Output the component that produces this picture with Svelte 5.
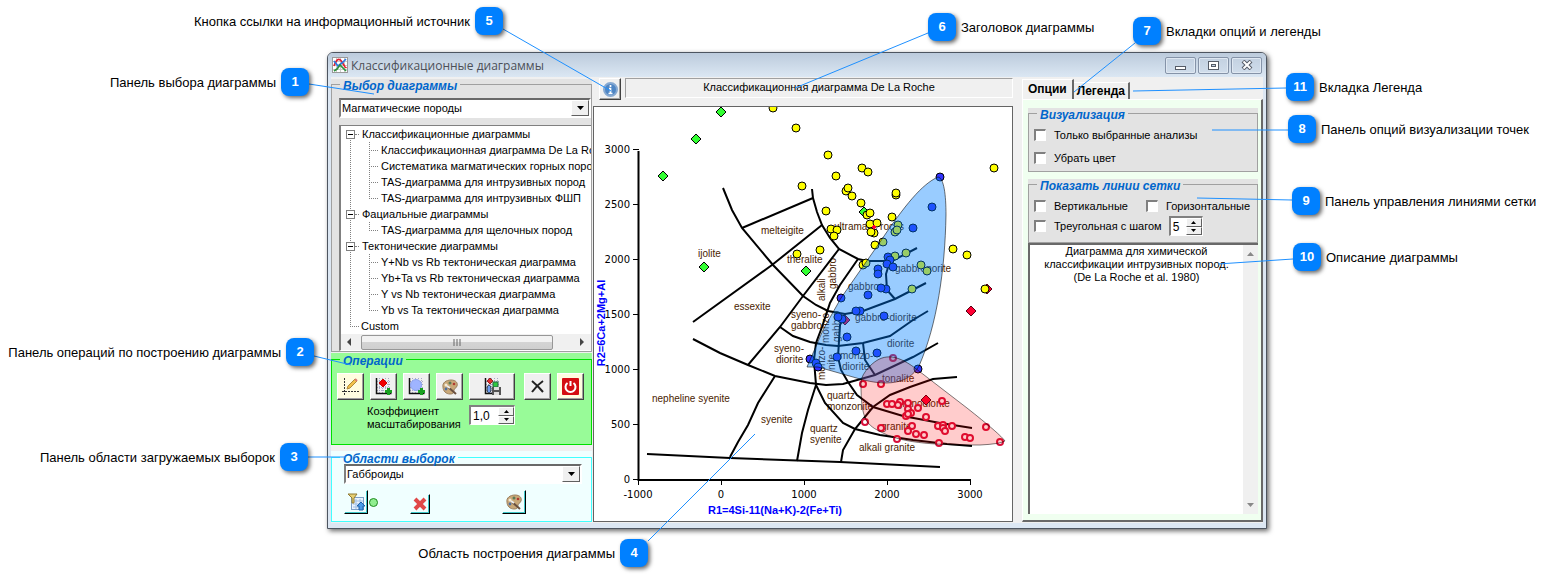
<script>
    const callouts = [
        { n: 1, x: 281, y: 68, side: "left", label: "Панель выбора диаграммы", line: [309, 84, 374, 94] },
        { n: 2, x: 286, y: 338, side: "left", label: "Панель операций по построению диаграммы", line: [314, 356, 351, 365] },
        { n: 3, x: 280, y: 443, side: "left", label: "Панель области загружаемых выборок", line: [308, 457, 346, 457] },
        { n: 4, x: 620, y: 539, side: "left", label: "Область построения диаграммы", line: [648, 541, 755, 434] },
        { n: 5, x: 475, y: 7, side: "left", label: "Кнопка ссылки на информационный источник", line: [503, 29, 611, 91] },
        { n: 6, x: 928, y: 13, side: "right", label: "Заголовок диаграммы", line: [928, 33, 795, 88] },
        { n: 7, x: 1133, y: 17, side: "right", label: "Вкладки опций и легенды", line: [1135, 43, 1074, 92] },
        { n: 8, x: 1288, y: 115, side: "right", label: "Панель опций визуализации точек", line: [1288, 130, 1212, 130] },
        { n: 9, x: 1292, y: 187, side: "right", label: "Панель управления линиями сетки", line: [1292, 200, 1197, 198] },
        { n: 10, x: 1293, y: 243, side: "right", label: "Описание диаграммы", line: [1293, 259, 1218, 264] },
        { n: 11, x: 1286, y: 73, side: "right", label: "Вкладка Легенда", line: [1286, 88, 1133, 91] },
    ];

    const tree = [
        {
            title: "Классификационные диаграммы",
            items: [
                "Классификационная диаграмма De La Roche",
                "Систематика магматических горных пород",
                "TAS-диаграмма для интрузивных пород",
                "TAS-диаграмма для интрузивных ФШП",
            ],
        },
        { title: "Фациальные диаграммы", items: ["TAS-диаграмма для щелочных пород"] },
        {
            title: "Тектонические диаграммы",
            items: [
                "Y+Nb vs Rb тектоническая диаграмма",
                "Yb+Ta vs Rb тектоническая диаграмма",
                "Y vs Nb тектоническая диаграмма",
                "Yb vs Ta тектоническая диаграмма",
            ],
        },
    ];
    let opened = $state([true, true, true]);

    const yTicks = [3000, 2500, 2000, 1500, 1000, 500, 0];
    const xTicks = [-1000, 0, 1000, 2000, 3000];

    // field boundaries
    const borders = [
        "647,454 730,458 840,462 940,467",
        "693,322 772,265 822,225",
        "723,188 732,210 742,228 773,265 803,296 816,305 828,311 845,314 863,311 895,299 926,283",
        "742,228 813,198",
        "812,189 813,198 817,212 822,225 830,238 839,249 858,259 867,261 892,261 917,248",
        "839,249 803,296 780,327 748,365",
        "858,259 840,285 830,303 822,327 816,343 814,360 816,385 808,410 802,433 797,461",
        "693,339 720,353 748,365 775,376 810,383 826,385 843,384 875,375 913,357 938,343",
        "775,376 758,403 748,425 738,442 730,457",
        "780,327 793,336 810,342 826,345 838,346 863,343 890,336 913,320 928,311",
        "845,314 840,325 838,357 841,370 848,382 857,395 873,407 903,416 940,423 972,428",
        "863,343 865,360 875,375",
        "890,261 886,274 887,290 895,299",
        "816,385 825,403 843,423 855,429 880,435 913,440 947,444 972,446",
        "841,462 843,450 855,429 873,407 890,395 910,387 933,379 957,377",
    ];

    const names = [
        [698, 257, "ijolite"], [761, 234, "melteigite"], [787, 263, "theralite"],
        [734, 310, "essexite"], [791, 318, "syeno-"], [791, 329, "gabbro"],
        [774, 352, "syeno-"], [776, 363, "diorite"], [652, 402, "nepheline syenite"],
        [761, 423, "syenite"], [827, 399, "quartz"], [827, 410, "monzonite"],
        [810, 432, "quartz"], [810, 443, "syenite"], [859, 451, "alkali granite"],
        [881, 430, "granite"], [897, 407, "granodiorite"], [882, 382, "tonalite"],
        [887, 347, "diorite"], [840, 359, "monzo-"], [842, 370, "diorite"],
        [855, 321, "gabbro-diorite"], [848, 290, "gabbro"], [895, 272, "gabbronorite"],
        [834, 230, "ultramafic rocks"],
    ];
    const upright = [
        [825, 301, "alkali"], [836, 289, "gabbro"], [829, 343, "monzo-"],
        [840, 342, "gabbro"], [825, 380, "monzo-"], [835, 370, "nite"],
    ];

    const yellow = [
        [773, 108], [796, 128], [828, 155], [802, 186], [826, 211], [820, 250], [797, 254],
        [862, 168], [868, 172], [836, 176], [994, 168], [846, 191], [848, 188], [852, 196],
        [861, 203], [896, 195], [896, 193], [867, 215], [870, 213], [892, 217], [870, 224],
        [877, 223], [874, 233], [871, 232], [875, 245], [883, 242], [831, 229], [837, 230],
        [834, 236], [953, 249], [967, 255], [863, 265], [866, 263], [898, 225], [895, 232],
        [897, 230], [895, 256], [906, 253], [921, 265], [927, 271], [912, 289],
    ];
    const blue = [
        [940, 177], [932, 207], [913, 228], [888, 257], [890, 260], [887, 264], [893, 267],
        [878, 269], [878, 274], [886, 289], [881, 288], [868, 295], [841, 298], [860, 311],
        [856, 311], [884, 316], [842, 319], [838, 317], [847, 337], [856, 351], [877, 353],
        [837, 357], [810, 359], [816, 363], [818, 367], [918, 369],
    ];
    const rings = [
        [893, 358], [863, 384], [881, 384], [887, 404], [892, 404], [900, 402], [898, 405],
        [908, 403], [908, 409], [911, 413], [918, 408], [906, 416], [908, 414], [926, 417],
        [942, 401], [865, 422], [881, 428], [912, 426], [908, 431], [916, 434], [924, 435],
        [938, 426], [943, 425], [943, 428], [952, 426], [945, 431], [897, 439], [939, 443],
        [965, 437], [970, 438], [986, 427], [1000, 442],
    ];
    const greenDiamonds = [[721, 112], [696, 139], [663, 176], [704, 267], [806, 271], [864, 212]];
    const redDiamonds = [[971, 311], [987, 289], [845, 320], [926, 400]];

    const diamond = ([x, y]) => `M${x} ${y - 5}l5 5-5 5-5-5z`;
</script>

{#snippet palette()}
    <svg width="18" height="18" viewBox="0 0 18 18">
        <path d="M2 9C1 5 5 2 10 2s7 3 6 6-3 2-3 4 0 4-4 4-7-3-7-7z" fill="#c9a878" stroke="#9b8060" />
        <circle cx="5" cy="7" r="1.5" fill="#f2ead8" />
        <circle cx="9" cy="5" r="1.5" fill="#5a7a58" />
        <circle cx="13" cy="6" r="1.3" fill="#b03a30" />
        <circle cx="5" cy="11" r="1.4" fill="#4f6fa0" />
        <path d="M7 9l8 7" stroke="#6a5040" stroke-width="2" />
        <path d="M6 8l3 2" stroke="#eee" stroke-width="2" />
    </svg>
{/snippet}

{#snippet grid()}
    <path d="M5.5 1v15M8.5 1v15M11.5 1v15M14.5 1v15M3 4.5h14M3 7.5h14M3 10.5h14M3 13.5h14" stroke="#a9a9c8" stroke-dasharray="1 1" />
    <path d="M2.5 1v15.5h15" stroke="#111" stroke-width="1.5" fill="none" />
{/snippet}

{#snippet spin()}
    <span class="spin-arrows">
        <button type="button" aria-label="Больше"><svg width="5" height="3"><path d="M2.5 0L5 3H0z" /></svg></button>
        <button type="button" aria-label="Меньше"><svg width="5" height="3"><path d="M0 0h5L2.5 3z" /></svg></button>
    </span>
{/snippet}

{#snippet dropArrow()}
    <span class="drop-arrow"><svg width="7" height="4"><path d="M0 0h7L3.5 4z" /></svg></span>
{/snippet}

<main class="page">
    <div class="window">
        <header class="titlebar">
            <svg width="16" height="16" viewBox="0 0 16 16">
                <rect x=".5" y=".5" width="15" height="15" fill="#fff" stroke="#999" />
                <path d="M4.5 1v14M8.5 1v14M12.5 1v14M1 4.5h14M1 8.5h14M1 12.5h14" stroke="#ccc" />
                <path d="M2 9Q6-2 10 5t4 5" fill="none" stroke="#e02030" stroke-width="1.7" />
                <path d="M2 4l4 5 4-3 4-4" fill="none" stroke="#2b78e0" stroke-width="1.7" />
                <path d="M2 14l3-2 3-4 6 6" fill="none" stroke="#2c8f3c" stroke-width="1.7" />
            </svg>
            <h1>Классификационные диаграммы</h1>
            <div class="caption-buttons">
                <button type="button" aria-label="Свернуть">
                    <svg width="11" height="9"><rect x=".5" y="5.5" width="10" height="3" fill="#fff" stroke="#555b66" /></svg>
                </button>
                <button type="button" aria-label="Развернуть">
                    <svg width="11" height="9"><rect x=".5" y=".5" width="10" height="8" fill="#fff" stroke="#555b66" /><rect x="3.5" y="3.5" width="4" height="2" fill="#c4d2e2" stroke="#555b66" /></svg>
                </button>
                <button type="button" aria-label="Закрыть">
                    <svg width="12" height="10"><path d="M2 1l8 8M10 1l-8 8" stroke="#555b66" stroke-width="4" /><path d="M2.5 1.5l7 7M9.5 1.5l-7 7" stroke="#fff" stroke-width="2" /></svg>
                </button>
            </div>
        </header>

        <div class="content">
            <div class="left">
                <div class="panel gray">
                    <fieldset class="choice">
                        <legend>Выбор диаграммы</legend>
                        <div class="select">
                            <select aria-label="Тип пород">
                                <option>Магматические породы</option>
                            </select>
                            {@render dropArrow()}
                        </div>
                        <div class="tree-box">
                            <ul class="tree">
                                {#each tree as group, i}
                                    <li>
                                        <div class="row">
                                            <button type="button" class="toggle" aria-label={group.title} onclick={() => (opened[i] = !opened[i])}>
                                                <svg width="7" height="7"><path d={opened[i] ? "M1 3.5h5" : "M1 3.5h5M3.5 1v5"} stroke="#000" /></svg>
                                            </button>
                                            <i class="stub"></i>
                                            <span>{group.title}</span>
                                        </div>
                                        {#if opened[i]}
                                            <ul class="branch">
                                                {#each group.items as item}
                                                    <li class="row"><i class="stub"></i><span>{item}</span></li>
                                                {/each}
                                            </ul>
                                        {/if}
                                    </li>
                                {/each}
                                <li class="row last"><i class="stub"></i><span>Custom</span></li>
                            </ul>
                            <div class="scroll-x">
                                <svg width="5" height="8"><path d="M5 0v8L1 4z" fill="#444" /></svg>
                                <div class="thumb"><svg width="8" height="7"><path d="M1 0v7M4 0v7M7 0v7" stroke="#666" /></svg></div>
                                <svg width="5" height="8"><path d="M0 0v8l4-4z" fill="#444" /></svg>
                            </div>
                        </div>
                    </fieldset>
                </div>

                <div class="panel green">
                    <fieldset class="operations">
                        <legend>Операции</legend>
                        <div class="tools">
                            <button type="button" class="tool cream" aria-label="Построить">
                                <svg width="19" height="19" viewBox="0 0 19 19">
                                    <path d="M3.5 1v17M1 14.5h17" stroke="#333" stroke-dasharray="2 1" />
                                    <path d="M6 12l1-3 7-7 2 2-7 7z" fill="#f2c24c" stroke="#b08a3a" />
                                    <path d="M14 2l2 2" stroke="#d87b70" stroke-width="2" />
                                </svg>
                            </button>
                            <button type="button" class="tool" aria-label="Добавить точки">
                                <svg width="19" height="19" viewBox="0 0 19 19">
                                    {@render grid()}
                                    <path d="M9 2l4 4-4 4-4-4z" fill="#f00000" stroke="#c00" />
                                    <path d="M14.5 11v7M11 14.5h7" stroke="#18a020" stroke-width="3" />
                                </svg>
                            </button>
                            <button type="button" class="tool" aria-label="Добавить область">
                                <svg width="19" height="19" viewBox="0 0 19 19">
                                    {@render grid()}
                                    <circle cx="9" cy="8" r="5.5" fill="#9fb4ff" stroke="#8ca2f0" />
                                    <path d="M14.5 11v7M11 14.5h7" stroke="#18a020" stroke-width="3" />
                                </svg>
                            </button>
                            <button type="button" class="tool" aria-label="Цвет точек">{@render palette()}</button>
                            <button type="button" class="tool wide" aria-label="Сохранить диаграмму">
                                <svg width="19" height="19" viewBox="0 0 19 19">
                                    {@render grid()}
                                    <path d="M7 1l3 3-3 3-3-3z" fill="#e03030" stroke="#922" />
                                    <ellipse cx="6" cy="12" rx="2" ry="4" fill="#6d9df0" stroke="#345" />
                                    <rect x="10" y="5" width="5" height="5" fill="#30c840" stroke="#264" />
                                    <path d="M9 10h9v8H9z" fill="#555" /><path d="M11 10h5v3h-5zM11 15h5v3h-5z" fill="#ddd" />
                                </svg>
                            </button>
                            <button type="button" class="tool apart" aria-label="Очистить">
                                <svg width="15" height="15"><path d="M2 2q6 5 11 11M13 2Q7 6 2 13" stroke="#222" stroke-width="2" fill="none" /></svg>
                            </button>
                            <button type="button" class="tool cream" aria-label="Выход">
                                <svg width="17" height="17"><rect width="17" height="17" rx="1" fill="#d40d12" /><path d="M5.5 5a5 5 0 1 0 6 0M8.5 3v5" fill="none" stroke="#fff" stroke-width="2" /></svg>
                            </button>
                        </div>
                        <div class="scale">
                            <label for="scale">Коэффициент масштабирования</label>
                            <span class="spin"><input id="scale" value="1,0" />{@render spin()}</span>
                        </div>
                    </fieldset>
                </div>

                <div class="panel azure">
                    <fieldset class="areas">
                        <legend>Области выборок</legend>
                        <div class="select">
                            <select aria-label="Выборка">
                                <option>Габброиды</option>
                            </select>
                            {@render dropArrow()}
                        </div>
                        <div class="area-tools">
                            <button type="button" class="flat" aria-label="Загрузить">
                                <svg width="17" height="18" viewBox="0 0 17 18">
                                    <rect x="3.5" y="4.5" width="12" height="12" fill="#eaf3ff" stroke="#7d9fc8" />
                                    <path d="M5 8h10M5 11h10M5 14h10M8 6v10M12 6v10" stroke="#9fbfe4" />
                                    <path d="M0 1h9L6 5v5H4V5z" fill="#e6cf72" stroke="#8f7a34" />
                                    <path d="M11 17v-4H9l4-4 4 4h-2v4z" fill="#4b9ae8" stroke="#1f62ac" />
                                </svg>
                            </button>
                            <svg class="dot" width="9" height="9"><circle cx="4.5" cy="4.5" r="4" fill="#90ee90" stroke="#208a20" /></svg>
                            <button type="button" class="flat small" aria-label="Удалить">
                                <svg width="14" height="14"><path d="M2 2l10 10M12 2L2 12" stroke="#e04848" stroke-width="4" /></svg>
                            </button>
                            <button type="button" class="flat color" aria-label="Цвет области">{@render palette()}</button>
                        </div>
                    </fieldset>
                </div>
            </div>

            <section class="center">
                <div class="heading">
                    <button type="button" class="info" aria-label="Источник">
                        <svg width="15" height="15" viewBox="0 0 15 15">
                            <circle cx="7.5" cy="7.5" r="6.5" fill="#4f86c4" stroke="#86a9d2" stroke-width="2" />
                            <path d="M7.5 3v2M6 6.500h1.500V11M5.500 11.500h4" fill="none" stroke="#fff" stroke-width="1.7" />
                        </svg>
                    </button>
                    <h2>Классификационная диаграмма De La Roche</h2>
                </div>
                <div class="chart">
                    <svg viewBox="594 107 418 414">
                        {#each names as [x, y, name]}
                            <text class="field" {x} {y}>{name}</text>
                        {/each}
                        {#each upright as [x, y, name]}
                            <text class="field" transform="translate({x} {y}) rotate(-90)">{name}</text>
                        {/each}
                        {#each borders as points}
                            <polyline class="border" {points} />
                        {/each}

                        <path class="axis" d="M638.5 151v329H971" />
                        {#each yTicks as v, i}
                            <path class="tick" d="M633 {149.5 + i * 55}h6" />
                            <text class="value" x="630" y={153 + i * 55} text-anchor="end">{v}</text>
                        {/each}
                        {#each xTicks as v, i}
                            <path class="tick" d="M{638.5 + i * 83} 480v5" />
                            <text class="value" x={638 + i * 83} y="498" text-anchor="middle">{v}</text>
                        {/each}
                        <text class="axis-title" x="775" y="514" text-anchor="middle">R1=4Si-11(Na+K)-2(Fe+Ti)</text>
                        <text class="axis-title" transform="translate(605 323) rotate(-90)" text-anchor="middle">R2=6Ca+2Mg+Al</text>

                        {#each greenDiamonds as p}<path d={diamond(p)} fill="#33ff33" stroke="#000" />{/each}
                        {#each redDiamonds as p}<path d={diamond(p)} fill="#ff0033" stroke="#501" />{/each}
                        <circle cx="985" cy="289" r="4" fill="#ffff00" stroke="#000" />
                        {#each yellow as [cx, cy]}<circle {cx} {cy} r="4" fill="#ffff00" stroke="#000" />{/each}
                        <path d="M874 225l2 2-2 2-2-2z" fill="#ff0033" stroke="#ff0033" />
                        {#each blue as [cx, cy]}<circle {cx} {cy} r="4" fill="#3333ff" stroke="#000" />{/each}
                        {#each rings as [cx, cy]}<circle {cx} {cy} r="3" fill="#fff" stroke="#d8103a" stroke-width="2" />{/each}

                        <path
                            d="M938 177C944 178 946 195 946 215C945 270 937 325 919 366C908 385 885 386 860 379L818 367H807L823 330L841 298L880 242C905 205 922 184 938 177z"
                            fill="rgba(0,128,255,.4)" stroke="rgba(0,0,0,.55)" />
                        <path
                            d="M861 383C861 420 866 425 883 433C905 444 940 445 980 445Q1000 444 1005 441Q1000 434 967 408L915 368C895 353 882 354 870 366Q861 375 861 383z"
                            fill="rgba(255,0,0,.2)" stroke="rgba(0,0,0,.5)" />
                    </svg>
                </div>
            </section>

            <aside class="right">
                <div class="tabs" role="tablist">
                    <button type="button" role="tab" class="tab active" aria-selected="true">Опции</button>
                    <button type="button" role="tab" class="tab" aria-selected="false">Легенда</button>
                </div>
                <div class="tab-page">
                    <div class="panel gray">
                        <fieldset class="view">
                            <legend>Визуализация</legend>
                            <label><input type="checkbox" />Только выбранные анализы</label>
                            <label><input type="checkbox" />Убрать цвет</label>
                        </fieldset>
                    </div>
                    <div class="panel gray second">
                        <fieldset class="lines">
                            <legend>Показать линии сетки</legend>
                            <label><input type="checkbox" />Вертикальные</label>
                            <label><input type="checkbox" />Горизонтальные</label>
                            <div class="step">
                                <label><input type="checkbox" />Треугольная с шагом</label>
                                <span class="spin short"><input aria-label="Шаг" value="5" />{@render spin()}</span>
                            </div>
                        </fieldset>
                    </div>
                    <div class="memo">
                        <textarea readonly aria-label="Описание диаграммы" value={"Диаграмма для химической\nклассификации интрузивных пород.\n(De La Roche et al. 1980)"}></textarea>
                        <div class="scroll-y">
                            <svg width="7" height="4"><path d="M0 4h7L3.5 0z" fill="#888" /></svg>
                            <svg width="7" height="4"><path d="M0 0h7L3.5 4z" fill="#888" /></svg>
                        </div>
                    </div>
                </div>
            </aside>
        </div>
    </div>

    <!-- numbered callouts drawn over the window -->
    <svg class="leaders">
        {#each callouts as { line }}
            <line x1={line[0]} y1={line[1]} x2={line[2]} y2={line[3]} />
        {/each}
    </svg>
    {#each callouts as c}
        {#if c.side === "left"}
            <div class="callout" style="right: calc(100% - {c.x + 28}px); top: {c.y}px">
                <span>{c.label}</span><b>{c.n}</b>
            </div>
        {:else}
            <div class="callout" style="left: {c.x}px; top: {c.y}px">
                <b>{c.n}</b><span>{c.label}</span>
            </div>
        {/if}
    {/each}
</main>

<style>
    :global(body) {
        background: #fff;
    }

    .page {
        position: relative;
        padding: 52px 283px 49px 327px;
        font-family: "Liberation Sans", Arial, sans-serif;
        font-size: 11px;
        color: #000;
    }

    .page * {
        box-sizing: border-box;
    }

    button,
    input,
    select,
    textarea {
        font: inherit;
        color: inherit;
        margin: 0;
        padding: 0;
        border-radius: 0;
    }

    svg {
        display: block;
        flex: none;
    }

    .window {
        border: 1px solid #4d5560;
        border-radius: 6px 6px 0 0;
        padding: 0 3px 5px;
        background: #dce7f3;
        box-shadow: 2px 2px 5px rgba(0, 0, 0, 0.6);
    }

    .titlebar {
        display: flex;
        align-items: center;
        height: 24px;
        margin: 0 -3px;
        padding: 0 4px;
        border-radius: 5px 5px 0 0;
        background: linear-gradient(#bccbdc, #dbe7f3);
    }

    .titlebar h1 {
        flex: 1;
        margin: 0 3px;
        font: 12px "Open Sans", "Noto Sans", sans-serif;
        color: #4c5058;
        white-space: nowrap;
    }

    .caption-buttons {
        display: flex;
        gap: 2px;
    }

    .caption-buttons button {
        display: flex;
        align-items: center;
        justify-content: center;
        width: 31px;
        height: 17px;
        border: 1px solid #8593a8;
        border-radius: 2px;
        background: linear-gradient(#c3d1e1, #d0ddeb);
        box-shadow: inset 0 0 0 1px #dfe8f2;
    }

    .content {
        display: grid;
        grid-template-columns: 262px minmax(0, 1fr) 241px;
        background: #f0f0f0;
        padding: 2px 0 1px;
    }

    .left {
        display: flex;
        flex-direction: column;
        padding-right: 1px;
    }

    fieldset {
        min-width: 0;
        margin: 0;
        padding: 0;
        border: 1px solid #a0a0a0;
    }

    legend {
        height: 10px;
        line-height: 14px;
        margin-left: 3px;
        padding: 0 3px;
        font-size: 12px;
        font-weight: bold;
        font-style: italic;
        color: #0066cc;
        white-space: nowrap;
    }

    .gray {
        background: #e3e3e3;
    }

    .green {
        margin-top: 1px;
        padding-top: 1px;
        background: #98fb98;
    }

    .green fieldset {
        border-color: #00e000;
    }

    .azure {
        flex: 1;
        display: grid;
        margin-top: 6px;
        padding-top: 1px;
        background: #f0ffff;
    }

    .azure fieldset {
        border-color: #40ffff;
    }

    .choice {
        padding: 9px 0 0 7px;
    }

    .choice legend {
        margin-left: 1px;
    }

    .select {
        display: grid;
        grid-template-columns: 1fr 18px;
        height: 20px;
        border: 2px solid #fff;
        border-top-color: #696969;
        border-left-color: #808080;
        background: #fff;
    }

    .select select {
        grid-area: 1 / 1 / 2 / 3;
        appearance: none;
        border: 0;
        padding-left: 1px;
        background: #fff;
        min-width: 0;
    }

    .drop-arrow {
        grid-area: 1 / 2 / 2 / 3;
        display: flex;
        align-items: center;
        justify-content: center;
        pointer-events: none;
        border: 1px solid #fff;
        border-right-color: #606060;
        border-bottom-color: #606060;
        background: #f0f0f0;
    }

    .tree-box {
        margin-top: 7px;
        border: 1px solid #808080;
        border-left-width: 2px;
        border-right: 0;
        border-bottom-color: #fff;
        background: #fff;
        overflow: hidden;
    }

    .tree,
    .branch {
        list-style: none;
        margin: 0;
        padding: 0;
    }

    .tree {
        background: repeating-linear-gradient(#808080 0 1px, transparent 1px 2px) 9px 8px / 1px calc(100% - 16px) no-repeat;
    }

    .branch {
        background: repeating-linear-gradient(#808080 0 1px, transparent 1px 2px) 28px 0 / 1px calc(100% - 8px) no-repeat;
    }

    .row {
        display: flex;
        align-items: center;
        height: 16px;
        padding-left: 5px;
        white-space: nowrap;
    }

    .branch .row {
        padding-left: 28px;
    }

    .last {
        padding-left: 9px;
    }

    .stub {
        flex: none;
        width: 4px;
        margin-right: 3px;
        border-top: 1px dotted #808080;
    }

    .branch .stub,
    .last .stub {
        width: 9px;
    }

    .last .stub {
        margin-right: 2px;
    }

    .toggle {
        width: 9px;
        height: 9px;
        border: 1px solid #808080;
        background: #fff;
    }

    .scroll-x {
        display: flex;
        align-items: center;
        gap: 10px;
        height: 16px;
        padding: 0 6px 0 5px;
        background: #f0f0f0;
    }

    .thumb {
        flex: 1;
        display: flex;
        align-items: center;
        justify-content: center;
        height: 15px;
        margin-right: 17px;
        border: 1px solid #979797;
        border-radius: 2px;
        background: linear-gradient(#f2f2f2 50%, #d4d4d4 50%, #cfcfcf);
    }

    .operations {
        padding: 9px 0 13px 5px;
    }

    .tools {
        display: flex;
        gap: 6px;
    }

    .tool,
    .info {
        display: flex;
        align-items: center;
        justify-content: center;
        width: 27px;
        height: 27px;
        border: 1px solid #fff;
        border-right-color: #404040;
        border-bottom-color: #404040;
        background: #f0f0f0;
        box-shadow: inset -1px -1px #a0a0a0;
    }

    .cream {
        background: #fffde0;
    }

    .wide {
        width: 46px;
    }

    .apart {
        margin-left: 3px;
    }

    .scale {
        display: flex;
        align-items: flex-start;
        margin-top: 5px;
        padding-left: 30px;
    }

    .scale label {
        width: 102px;
        line-height: 13px;
    }

    .spin {
        display: flex;
        width: 46px;
        height: 20px;
        border: 1px solid #fff;
        border-top: 2px solid #808080;
        border-left: 2px solid #808080;
        background: #fff;
    }

    .short {
        width: 34px;
    }

    .spin input {
        flex: 1;
        min-width: 0;
        border: 0;
        outline: 0;
        padding-left: 2px;
        font-size: 12px;
        background: #fff;
    }

    .spin-arrows {
        display: flex;
        flex-direction: column;
        width: 16px;
    }

    .spin-arrows button {
        flex: 1;
        min-height: 0;
        display: flex;
        align-items: center;
        justify-content: center;
        border: 1px solid #fff;
        border-right-color: #606060;
        border-bottom-color: #606060;
        background: #f0f0f0;
    }

    .areas {
        padding: 2px 9px 7px 3px;
    }

    .areas legend {
        margin-left: 5px;
    }

    .areas .select {
        margin-left: 9px;
    }

    .area-tools {
        display: flex;
        align-items: flex-end;
        margin: 6px 0 0 9px;
    }

    .flat {
        display: flex;
        align-items: center;
        justify-content: center;
        width: 24px;
        height: 24px;
        border: 1px solid #f0ffff;
        border-right-color: #000;
        border-bottom-color: #000;
        background: #f0ffff;
        box-shadow: inset -1px -1px #40c8c8;
    }

    .small {
        width: 20px;
        height: 20px;
        margin-left: 32px;
    }

    .color {
        margin-left: 72px;
    }

    .dot {
        margin-left: 1px;
        align-self: center;
    }

    .center {
        min-width: 0;
        margin-right: 9px;
    }

    .heading {
        display: flex;
        align-items: flex-start;
        gap: 4px;
        margin: -1px 0 6px 6px;
    }

    .info {
        width: 22px;
        height: 22px;
    }

    .heading h2 {
        flex: 1;
        height: 20px;
        line-height: 16px;
        margin: 0;
        border: 1px solid #fff;
        border-top-color: #a0a0a0;
        border-left-color: #a0a0a0;
        font-size: 11px;
        font-weight: normal;
        text-align: center;
        white-space: nowrap;
    }

    .chart {
        border: 1px solid #646464;
        background: #fff;
    }

    .chart svg {
        width: 100%;
        height: auto;
    }

    .field {
        font-size: 10px;
        fill: #4a1c00;
    }

    .value {
        font: 10px "DejaVu Sans", sans-serif;
    }

    .axis-title {
        font-size: 11px;
        font-weight: bold;
        fill: #0000ff;
    }

    .border,
    .axis {
        fill: none;
        stroke: #000;
        stroke-width: 2;
    }

    .tick {
        stroke: #000;
    }

    .right {
        display: flex;
        flex-direction: column;
    }

    .tabs {
        display: flex;
        align-items: flex-end;
        height: 20px;
    }

    .tab {
        height: 17px;
        padding: 0 3px;
        border: 0;
        border-top: 1px solid #fff;
        border-right: 2px solid #696969;
        background: #f0f0f0;
        font-size: 12px;
        font-weight: bold;
        line-height: 15px;
    }

    .active {
        height: 20px;
        padding: 0 5px;
        border-left: 1px solid #fff;
    }

    .tab-page {
        flex: 1;
        display: flex;
        flex-direction: column;
        padding: 8px 3px 6px 5px;
        border: 1px solid #fff;
        border-right: 2px solid #696969;
        border-bottom: 2px solid #696969;
        background: #f0fff0;
    }

    .second {
        margin-top: 7px;
    }

    .view {
        height: 64px;
        padding: 5px 0 0 5px;
    }

    .tab-page label {
        display: flex;
        align-items: center;
        gap: 8px;
        white-space: nowrap;
    }

    .view label {
        height: 23px;
    }

    .tab-page input[type="checkbox"] {
        appearance: none;
        width: 12px;
        height: 12px;
        border: 1px solid #fff;
        border-top: 2px solid #808080;
        border-left: 2px solid #808080;
        background: #fff;
    }

    .lines {
        display: grid;
        grid-template-columns: 112px 1fr;
        align-content: start;
        height: 64px;
        padding: 7px 0 0 5px;
    }

    .lines label {
        height: 20px;
    }

    .step {
        grid-column: 1 / 3;
        display: flex;
        gap: 7px;
    }

    .memo {
        flex: 1;
        display: flex;
        border: 2px solid #696969;
        border-right: 0;
        border-bottom: 0;
        background: #fff;
    }

    .memo textarea {
        flex: 1;
        min-width: 0;
        border: 0;
        outline: 0;
        resize: none;
        overflow: hidden;
        line-height: 13px;
        text-align: center;
        background: #fff;
    }

    .scroll-y {
        display: flex;
        flex-direction: column;
        align-items: center;
        justify-content: space-between;
        width: 15px;
        padding: 7px 0;
        background: #f0f0f0;
    }

    .leaders {
        position: absolute;
        inset: 0;
        width: 100%;
        height: 100%;
        pointer-events: none;
    }

    .leaders line {
        stroke: #1e90ff;
        stroke-width: 1;
    }

    .callout {
        position: absolute;
        display: flex;
        align-items: center;
        gap: 5px;
        font-size: 13px;
        white-space: nowrap;
    }

    .callout b {
        width: 28px;
        height: 28px;
        line-height: 28px;
        border-radius: 8px;
        background: #0080ff;
        box-shadow: 2px 2px 4px rgba(0, 0, 0, 0.6);
        color: #fff;
        text-align: center;
    }
</style>
